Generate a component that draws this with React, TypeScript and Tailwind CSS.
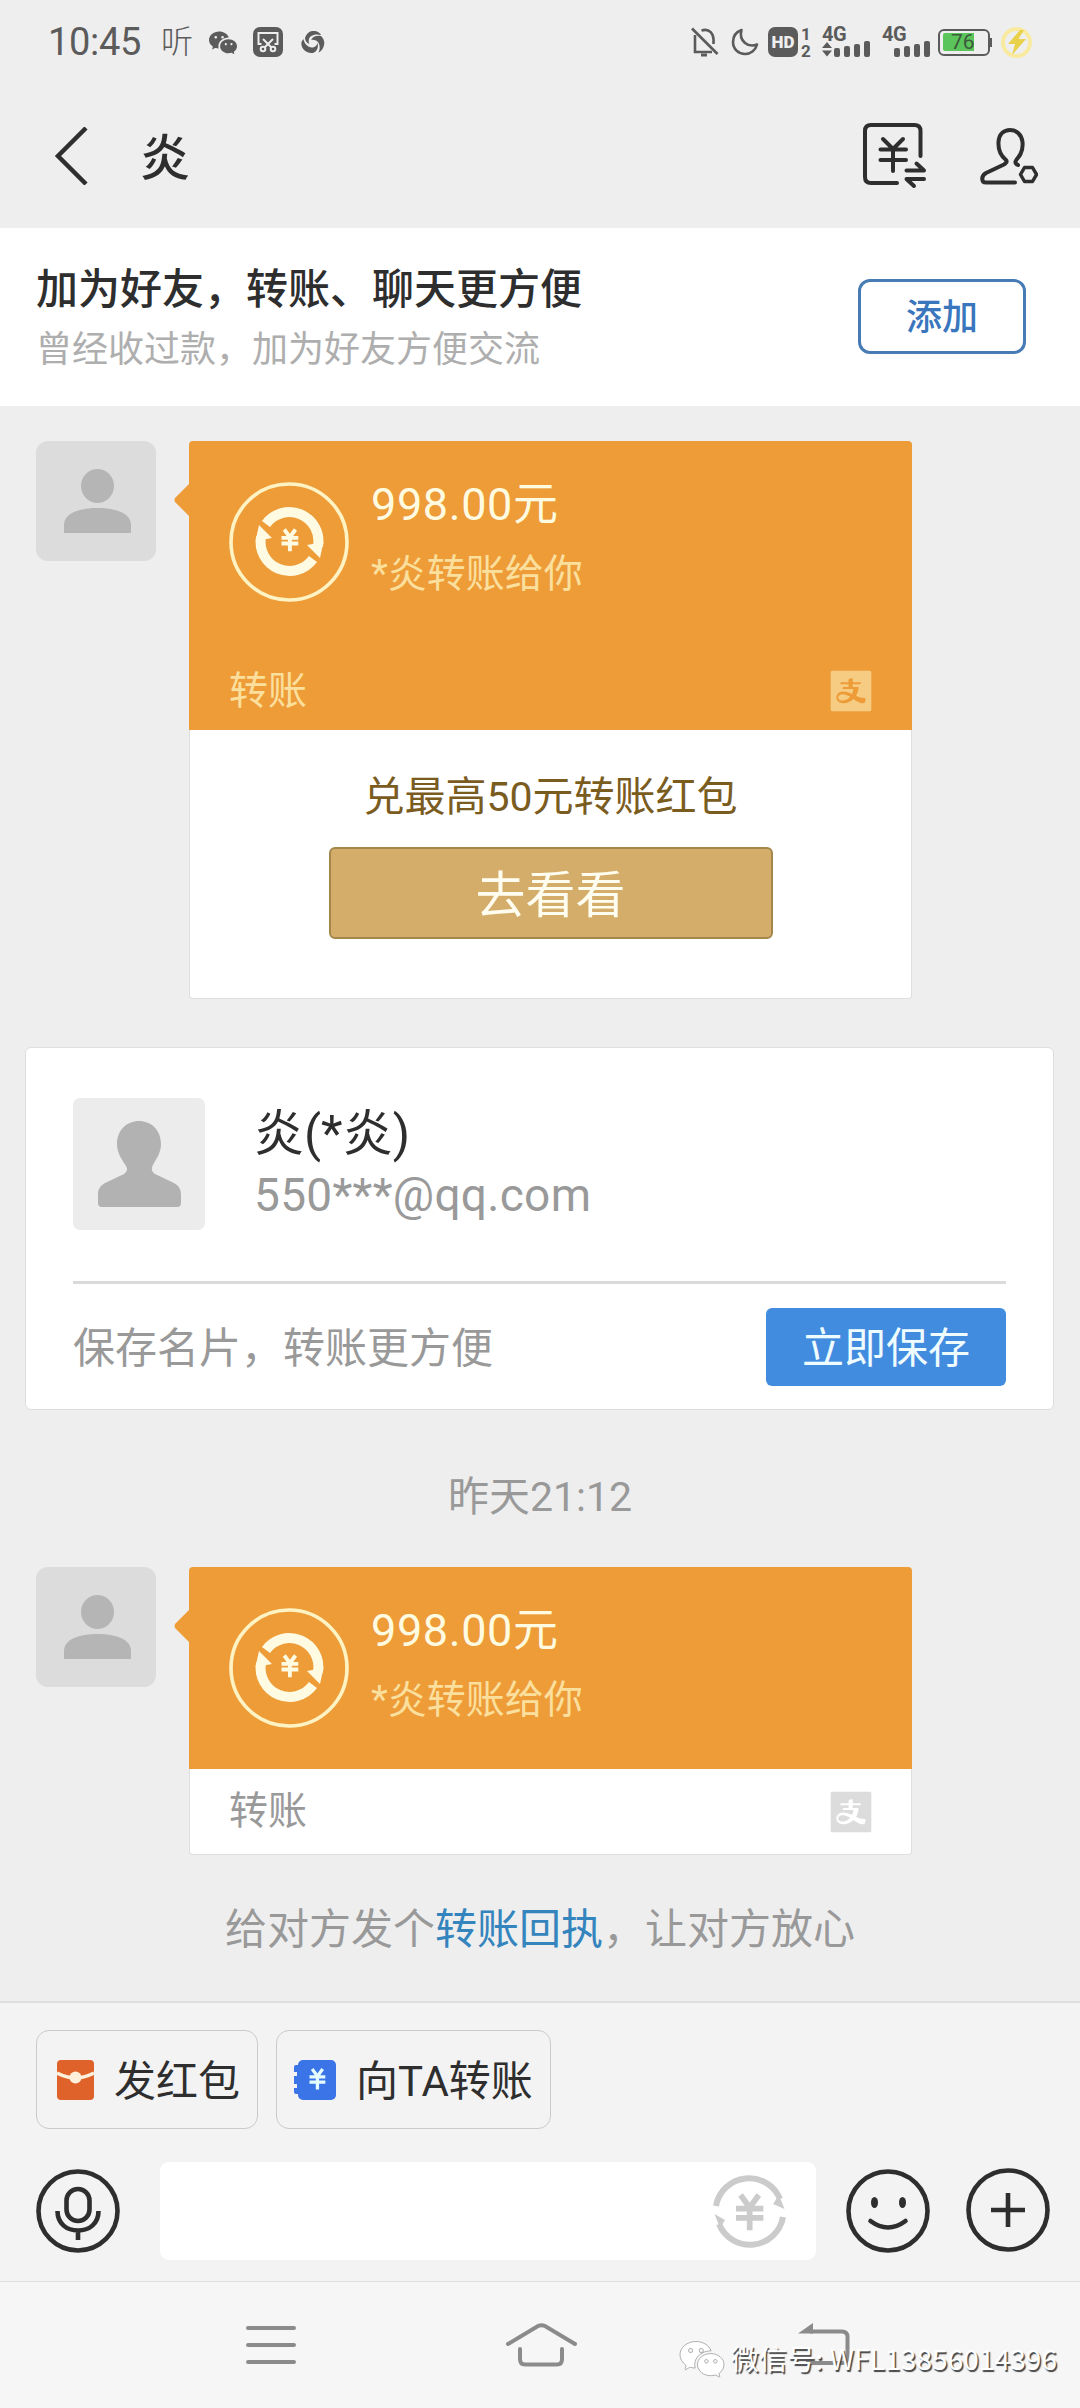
import React from "react";
import { AiFillAlipaySquare } from "react-icons/ai";
import { BsWechat } from "react-icons/bs";

/* Yuan sign drawn with strokes on a 24x28 grid */
function Yuan({ x, y, s, w, color }: { x: number; y: number; s: number; w: number; color: string }) {
  return (
    <g transform={`translate(${x} ${y}) scale(${s})`} stroke={color} strokeWidth={w} fill="none">
      <path d="M4 0 L12 11 L20 0 M0 12 H24 M0 20 H24 M12 11 V31" />
    </g>
  );
}

function Signal({ arrows }: { arrows?: boolean }) {
  return (
    <div className="flex h-[30px] w-[48px] flex-col text-[#5b5b5b]">
      <div className="h-[15px] text-[20px] leading-[15px] font-bold tracking-[-0.5px]">4G</div>
      <div className={arrows ? "-mt-[1px] flex items-end" : "-mt-[1px] flex items-end"}>
        <svg width="11" height="16" viewBox="0 0 11 16" fill={arrows ? "#5b5b5b" : "none"}>
          <path d="M0 7 L5 1 L10 7Z M0 9.5 L5 15.5 L10 9.5Z" />
        </svg>
        <div className="ml-[1px] flex items-end gap-[4px]">
          <i className="h-[9px] w-[6px] rounded-[2px] bg-[#5b5b5b]" />
          <i className="h-[11px] w-[6px] rounded-[2px] bg-[#5b5b5b]" />
          <i className="h-[13px] w-[6px] rounded-[2px] bg-[#5b5b5b]" />
          <i className="h-[16px] w-[6px] rounded-[2px] bg-[#5b5b5b]" />
        </div>
      </div>
    </div>
  );
}

function StatusBar() {
  return (
    <div className="flex h-[84px] items-center pl-[48px] text-[#5b5b5b]">
      <span className="w-[97px] text-[38px] leading-none tracking-[-0.3px]">10:45</span>
      <span className="ml-[16px] w-[32px] text-[32px] leading-none font-light">听</span>
      <BsWechat className="ml-[16px]" size={28} />
      <svg className="ml-[16px]" width="30" height="30" viewBox="0 0 30 30">
        <rect width="30" height="30" rx="7" fill="#5b5b5b" />
        <g fill="none" stroke="#eee" strokeWidth="2">
          <path d="M8.5 17 H5.5 V6 H24.5 V17 H21.5" />
          <path d="M10 12 L18.5 20.5 M20 12 L11.5 20.5" />
          <circle cx="10" cy="22" r="2.3" />
          <circle cx="20" cy="22" r="2.3" />
        </g>
      </svg>
      <svg className="ml-[18px]" width="24" height="24" viewBox="0 0 24 24">
        <g fill="#5b5b5b">
          <path d="M4 8 C6 2 10 .5 14 1 C17 1.5 19 3 20 5 C15 3.500 9 5 8 9 C7 12 8.500 14 8.500 14 C5.500 13 4 10 4 8Z" />
          <path d="M20 6 C24 10 24 14 22 18 C21 20 19.500 21.500 17.500 22.500 C20 18 18.500 12 15 10.500 C13 9.500 10.500 9.800 10 10 C11.500 6.500 16 5 20 6Z" />
          <path d="M2.500 9 C3 13 6.500 17.500 11 17.500 C14.500 17.500 16 15 16.500 13 C18 18 15 23 10.500 23 C4 23 -1 17 .700 11.500Z" />
        </g>
      </svg>

      <svg className="ml-[366px]" width="28" height="30" viewBox="0 0 28 30" fill="none" stroke="#5b5b5b" strokeWidth="2.6">
        <path d="M1 1.500 L26.500 27" />
        <path d="M4 8 V25 H21" />
        <path d="M10.500 3.500 C18 1 23.500 6 22.500 17" />
        <path d="M10 28 H16" strokeWidth="3" />
      </svg>
      <svg className="ml-[12px]" width="28" height="28" viewBox="0 0 28 28" fill="none" stroke="#5b5b5b" strokeWidth="2.600" strokeLinejoin="round">
        <path d="M10.500 2 C5 4 2 8.500 2 14 C2 21 7.500 26 14 26 C19.500 26 24.500 22.500 26 16.500 C17 20 7.500 13 10.500 2Z" />
      </svg>
      <div className="ml-[9px] flex h-[30px] w-[30px] items-center justify-center rounded-[7px] bg-[#5b5b5b] text-[17px] leading-none font-black text-[#eee]">
        HD
      </div>
      <div className="ml-[2px] flex h-[31px] w-[12px] flex-col justify-between text-center text-[17px] leading-[14px] font-bold">
        <span>1</span>
        <span>2</span>
      </div>
      <div className="ml-[10px]">
        <Signal arrows />
      </div>
      <div className="ml-[12px]">
        <Signal />
      </div>
      <div className="ml-[8px] flex h-[27px] w-[52px] items-center rounded-[6px] border-[2px] border-[#5b5b5b] pl-[3px]">
        <div className="flex h-[18px] w-[31px] items-center rounded-l-[2px] bg-[#5bc45a] pl-[8px] text-[21px] leading-none text-[#3c5a3c]">
          76
        </div>
      </div>
      <i className="h-[9px] w-[2px] bg-[#5b5b5b]" />
      <svg className="ml-[9px]" width="31" height="31" viewBox="0 0 31 31">
        <circle cx="15.500" cy="15.500" r="13.500" fill="none" stroke="#f8eba0" strokeWidth="4" />
        <path d="M19 3 L7 17 H14 L11 28 L25 12 H17.500 L23 3Z" fill="#e9d24a" />
      </svg>
    </div>
  );
}

function Header() {
  return (
    <div className="flex h-[144px] items-center pl-[54px] text-[#2e2e2e]">
      <svg width="36" height="58" viewBox="0 0 36 58" fill="none" stroke="#2e2e2e" strokeWidth="4.500">
        <path d="M32 1 L4 29 L32 57" />
      </svg>
      <span className="mt-[6px] ml-[50px] text-[50px] leading-none font-medium">炎</span>
      <svg className="ml-auto" width="64" height="66" viewBox="0 0 64 66" fill="none" stroke="#2e2e2e" strokeWidth="4" strokeLinecap="round" strokeLinejoin="round">
        <path d="M57.500 33 V8 Q57.500 2 51.500 2 H8 Q2 2 2 8 V54 Q2 60 8 60 H34" />
        <path d="M20 16 L30 26 L40 16 M17.500 26.500 H43 M17.500 37 H43 M30 26 V48" />
        <path d="M43.500 47.500 H61 L53.500 40.500 M61 56 H43.500 L51 63" />
      </svg>
      <svg className="mr-[42px] ml-[53px]" width="58" height="57" viewBox="0 0 58 57" fill="none" stroke="#2e2e2e" strokeWidth="4" strokeLinecap="round" strokeLinejoin="round">
        <path d="M38 37 C32 34 38 31 40.500 26 C42 23 43 19 42.500 14 C41.500 6 36 2 30 2 C24 2 19 6 18.500 14 C18 22 21 28 26 32 C27.500 34 26 35 24 36.500 L6 45 C1 48 1 54.500 6 54.500 H35" />
        <path d="M40.500 46.500 L44.500 39.500 H52.500 L56.500 46.500 L52.500 53.500 H44.500Z" strokeWidth="3.500" />
      </svg>
    </div>
  );
}

function ChatAvatar() {
  return (
    <svg className="shrink-0" width="120" height="120" viewBox="0 0 120 120">
      <rect width="120" height="120" rx="12" fill="#dcdcdc" />
      <ellipse cx="61.500" cy="45" rx="16.500" ry="17" fill="#b5b5b5" />
      <path d="M28 92 V84 C28 72 44 67 61.500 67 C79 67 95 72 95 84 V92Z" fill="#b5b5b5" />
    </svg>
  );
}

function TransferIcon() {
  return (
    <svg className="shrink-0" width="120" height="120" viewBox="0 0 120 120" fill="none">
      <circle cx="60" cy="60" r="58" stroke="#fff3c4" strokeWidth="3.600" />
      <g stroke="#fffbe3" strokeWidth="10">
        <path d="M37 42 A29 29 0 0 1 89 64" />
        <path d="M84 77 A29 29 0 0 1 32 55" />
      </g>
      <path d="M78 63 L94.500 60 L91 76Z M43 56 L26.500 59 L30 43Z" fill="#fffbe3" />
      <Yuan x={52.500} y={47.500} s={0.7} w={5.5} color="#fffbe3" />
    </svg>
  );
}

function TransferBody() {
  return (
    <div className="flex pt-[41px] pl-[40px]">
      <TransferIcon />
      <div className="ml-[22px] flex flex-col">
        <span className="text-[45px] leading-[45px] tracking-[0.6px] text-[#fffbe0]">998.00元</span>
        <span className="mt-[28px] text-[39px] leading-[39px] text-[#fbdf9d]">*炎转账给你</span>
      </div>
    </div>
  );
}

function Bubble({ children }: { children: React.ReactNode }) {
  return (
    <div className="flex pl-[36px]">
      <ChatAvatar />
      <div className="relative ml-[33px] w-[723px]">
        <svg className="absolute top-[42px] -left-[15px]" width="16" height="34" viewBox="0 0 16 34">
          <path d="M16 0 L1 15 Q0 17 1 19 L16 34Z" fill="#ed9c38" />
        </svg>
        {children}
      </div>
    </div>
  );
}

export default function App() {
  return (
    <div className="relative flex h-[2408px] w-[1080px] flex-col overflow-hidden bg-[#eeeeee] font-['Roboto','Noto_Sans_CJK_SC',sans-serif]">
      <StatusBar />
      <Header />

      {/* Add-friend banner */}
      <div className="flex h-[178px] items-start justify-between bg-white pr-[54px] pl-[36px]">
        <div className="flex flex-col pt-[41px]">
          <span className="text-[42px] leading-[42px] font-medium text-[#2e2e2e]">加为好友，转账、聊天更方便</span>
          <span className="mt-[21px] text-[36px] leading-[36px] text-[#aeaeae]">曾经收过款，加为好友方便交流</span>
        </div>
        <button className="mt-[51px] flex h-[75px] w-[168px] items-center justify-center rounded-[12px] border-[3px] border-[#477bb4] pt-[3px] text-[36px] leading-none font-medium text-[#3a76bd]">
          添加
        </button>
      </div>

      {/* First transfer */}
      <div className="mt-[35px]">
        <Bubble>
          <div className="flex h-[289px] flex-col rounded-t-[4px] bg-[#ed9c38]">
            <TransferBody />
            <div className="mt-auto flex items-center justify-between pr-[35px] pb-[19px] pl-[40px]">
              <span className="text-[39px] leading-[39px] text-[#fbdf9d]">转账</span>
              <AiFillAlipaySquare className="-my-[6px]" size={52} color="#f6cb82" />
            </div>
          </div>
          <div className="flex h-[269px] flex-col items-center rounded-b-[4px] border border-t-0 border-[#dedede] bg-white pt-[47px]">
            <span className="text-[41px] leading-[41px] text-[#7b5c1f]">兑最高50元转账红包</span>
            <button className="mt-[29px] flex h-[92px] w-[444px] items-center justify-center rounded-[6px] border-[2px] border-[#a5874c] bg-[#d3ad69] pt-[6px] text-[50px] leading-none text-[#fffdf0]">
              去看看
            </button>
          </div>
        </Bubble>
      </div>

      {/* Contact card */}
      <div className="mt-[48px] ml-[25px] flex h-[363px] w-[1029px] flex-col rounded-[6px] border border-[#dedede] bg-white px-[47px]">
        <div className="mt-[50px] flex">
          <svg width="132" height="132" viewBox="0 0 132 132">
            <rect width="132" height="132" rx="7" fill="#ececec" />
            <path d="M66 23 C54 23 44 32 44 46 C44 54 48 60 51 65 C55 70 55 73 51 76 L32 85 C27 88 25 91 25 97 V105 Q25 109 29 109 H104 Q108 109 108 105 V97 C108 91 106 88 101 85 L82 76 C78 73 78 70 81 65 C84 60 88 54 88 46 C88 32 78 23 66 23Z" fill="#b2b2b2" />
          </svg>
          <div className="ml-[49px] flex flex-col pt-[11px]">
            <span className="text-[50px] leading-[50px] text-[#2e2e2e]">炎(*炎)</span>
            <span className="mt-[13px] text-[46px] leading-[46px] tracking-[0.3px] text-[#999]">550***@qq.com</span>
          </div>
        </div>
        <div className="mt-[51px] h-[3px] w-[933px] bg-[#dadada]" />
        <div className="mt-[24px] flex w-[933px] items-start justify-between">
          <span className="mt-[20px] text-[42px] leading-[42px] text-[#999]">保存名片，转账更方便</span>
          <button className="flex h-[78px] w-[240px] items-center justify-center rounded-[6px] bg-[#428ce0] pt-[3px] text-[42px] leading-none text-[#effcff]">
            立即保存
          </button>
        </div>
      </div>

      <div className="mt-[65px] text-center text-[41px] leading-[44px] text-[#999]">昨天21:12</div>

      {/* Second transfer */}
      <div className="mt-[48px]">
        <Bubble>
          <div className="h-[202px] rounded-t-[4px] bg-[#ed9c38]">
            <TransferBody />
          </div>
          <div className="flex h-[86px] items-center justify-between rounded-b-[4px] border border-t-0 border-[#dedede] bg-white pr-[34px] pl-[39px]">
            <span className="text-[39px] leading-[39px] text-[#999]">转账</span>
            <AiFillAlipaySquare size={52} color="#dcdcdc" />
          </div>
        </Bubble>
      </div>
      <div className="mt-[54px] text-center text-[42px] leading-[42px] whitespace-nowrap text-[#999]">
        给对方发个<span className="text-[#3484bd]">转账回执</span>，让对方放心
      </div>

      {/* Composer */}
      <div className="mt-auto flex h-[280px] shrink-0 flex-col border-t-2 border-[#dedede] bg-[#f3f3f3] px-[36px]">
        <div className="mt-[27px] flex gap-[18px]">
          <div className="flex h-[99px] w-[222px] items-center rounded-[13px] border border-[#cacaca] pl-[20px]">
            <svg width="37" height="40" viewBox="0 0 37 40">
              <rect width="37" height="40" rx="4" fill="#e0622b" />
              <path d="M0 13 Q10 18 18.500 18 T37 13" stroke="#fff0dc" strokeWidth="3.500" fill="none" />
              <circle cx="18.500" cy="17.500" r="6" fill="#fff0dc" />
            </svg>
            <span className="mt-[4px] ml-[20px] text-[42px] leading-[42px] whitespace-nowrap text-[#2e2e2e]">发红包</span>
          </div>
          <div className="flex h-[99px] w-[275px] items-center rounded-[13px] border border-[#cacaca] pl-[17px]">
            <svg width="42" height="40" viewBox="0 0 42 40">
              <rect x="4" width="38" height="40" rx="5" fill="#3b74e6" />
              <path d="M5 5 H2 Q0 5 0 7 V12 H3 V16 H0 V24 H3 V28 H0 V32 Q0 34 2 34 H5Z" fill="#3b74e6" />
              <Yuan x={15.500} y={9} s={0.66} w={5} color="#e4fbff" />
            </svg>
            <span className="mt-[4px] ml-[20px] text-[42px] leading-[42px] whitespace-nowrap text-[#2e2e2e]">向TA转账</span>
          </div>
        </div>
        <div className="-mr-[6px] mt-[33px] flex h-[98px] items-center">
          <svg width="84" height="84" viewBox="0 0 84 84" fill="none" stroke="#2e2e2e" strokeWidth="4.600">
            <circle cx="42" cy="42" r="39.500" />
            <rect x="30.500" y="20" width="23" height="32" rx="11.500" />
            <path d="M21.500 42 C21.500 55 31 61.500 42 61.500 S62.500 55 62.500 42 M42 61 V71" />
          </svg>
          <div className="ml-[40px] flex h-[98px] w-[656px] items-center justify-end rounded-[9px] bg-white pr-[30px]">
            <svg width="73" height="73" viewBox="0 0 73 73" fill="none">
              <g stroke="#cbcbcb" strokeWidth="6">
                <path d="M3 31 A33.500 33.500 0 0 1 67 24" />
                <path d="M70 42 A33.500 33.500 0 0 1 6 49" />
              </g>
              <path d="M71.500 34 L60 29 L66 20Z M1.500 39 L12 45 L7 53Z" fill="#cbcbcb" />
              <Yuan x={23} y={20} s={1.14} w={5} color="#cbcbcb" />
            </svg>
          </div>
          <svg className="ml-[30px]" width="84" height="84" viewBox="0 0 84 84" fill="none" stroke="#2e2e2e" strokeWidth="4.600">
            <circle cx="42" cy="42" r="39.500" />
            <ellipse cx="28.500" cy="33.500" rx="3.500" ry="5.500" fill="#2e2e2e" stroke="none" />
            <ellipse cx="56.500" cy="33.500" rx="3.500" ry="5.500" fill="#2e2e2e" stroke="none" />
            <path d="M24.500 52 Q42 65 59.500 52" strokeLinecap="round" />
          </svg>
          <svg className="-mt-[2px] ml-[36px]" width="84" height="84" viewBox="0 0 84 84" fill="none" stroke="#2e2e2e" strokeWidth="4.600">
            <circle cx="42" cy="42" r="39.500" />
            <path d="M25 42 H59 M42 25 V59" />
          </svg>
        </div>
      </div>

      {/* System navigation */}
      <div className="flex h-[127px] shrink-0 items-start border-t border-[#dedede] bg-[#f6f6f6] pt-[41px] pl-[246px]">
        <svg width="50" height="43" viewBox="0 0 50 43" stroke="#8b8b8b" strokeWidth="4" strokeLinecap="round">
          <path d="M2 5 H48 M2 22 H48 M2 39 H48" />
        </svg>
        <svg className="ml-[210px]" width="71" height="44" viewBox="0 0 71 44" fill="none" stroke="#8b8b8b" strokeWidth="4" strokeLinecap="round">
          <path d="M2 21 L32 3 Q35.500 1.500 39 3 L69 21" />
          <path d="M14 26 V36 Q14 41.500 19 41.500 H51 Q56 41.500 56 36 V26" />
        </svg>
        <svg className="ml-[221px]" width="52" height="44" viewBox="0 0 52 44" fill="none" stroke="#8b8b8b" strokeWidth="4">
          <path d="M12 8.500 H44 Q49.500 8.500 49.500 14 V34 Q49.500 40 44 40 H8" />
          <path d="M0 10.500 L15 0 V10.500Z" fill="#8b8b8b" stroke="none" />
        </svg>
      </div>

      {/* Watermark laid over the navigation bar */}
      <div className="absolute top-[2338px] left-[680px] flex items-center text-white">
        <BsWechat size={44} className="-my-[3px] overflow-visible" stroke="#8d8d8d" strokeWidth={0.25} />
        <span className="ml-[7px] text-[28px] leading-[40px] tracking-[0.1px] whitespace-nowrap font-['Noto_Sans_CJK_SC',sans-serif] [text-shadow:1.5px_1.5px_1px_#444]">
          微信号: WFL13856014396
        </span>
      </div>
    </div>
  );
}
